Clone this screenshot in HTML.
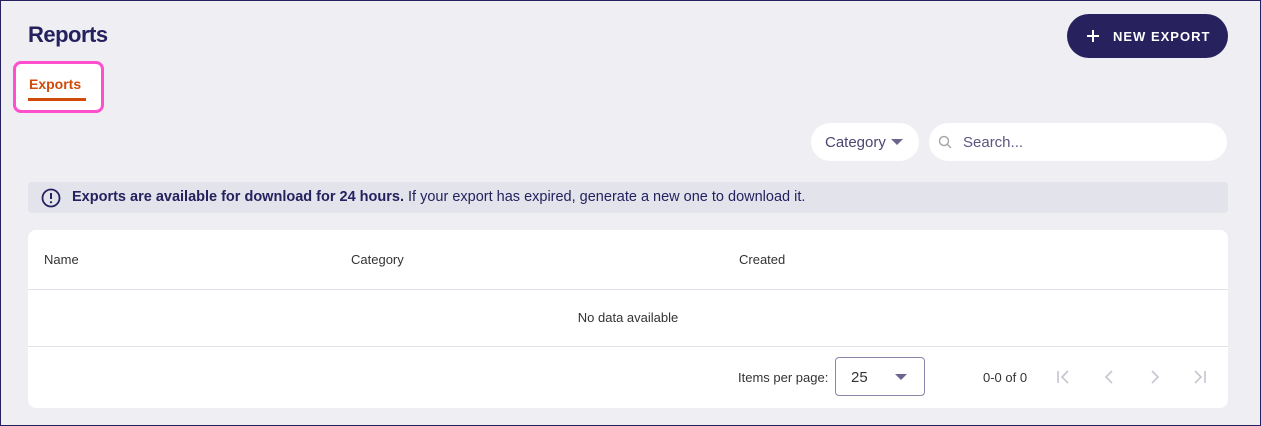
<!DOCTYPE html>
<html><head><style>
*{box-sizing:border-box;margin:0;padding:0}
body{width:1261px;height:426px;background:#eeeef3;font-family:"Liberation Sans",sans-serif;position:relative;overflow:hidden;color:#25215e}
.a{position:absolute}
</style></head><body>
<div class="a" style="left:0;top:0;width:1261px;height:426px;border:1px solid #25215e;z-index:5"></div>
<div class="a" style="left:28px;top:22px;font-size:22px;font-weight:bold;letter-spacing:-0.5px;color:#25215e">Reports</div>
<div class="a" style="left:1067px;top:14px;width:161px;height:44px;border-radius:22px;background:#27215e;color:#fff;font-weight:bold;font-size:13px;letter-spacing:1px">
 <svg class="a" style="left:19px;top:15px" width="14" height="14" viewBox="0 0 14 14"><path d="M7 1v12M1 7h12" stroke="#fff" stroke-width="2"/></svg>
 <span class="a" style="left:46px;top:15px">NEW EXPORT</span></div>
<div class="a" style="left:13px;top:61px;width:91px;height:52px;border:3px solid #ff4fcc;border-radius:8px;background:#fff"></div>
<div class="a" style="left:29px;top:76px;font-size:14px;font-weight:bold;color:#d04a0a">Exports</div>
<div class="a" style="left:28px;top:98px;width:58px;height:3px;background:#d04a0a"></div>
<div class="a" style="left:811px;top:123px;width:108px;height:38px;border-radius:19px;background:#fff;font-size:15px;color:#4a4670">
 <span class="a" style="left:14px;top:11px">Category</span>
 <span class="a" style="left:80px;top:16px;border-left:6px solid transparent;border-right:6px solid transparent;border-top:6px solid #6a6690"></span></div>
<div class="a" style="left:929px;top:123px;width:298px;height:38px;border-radius:19px;background:#fff;font-size:15px;color:#5a5680">
 <svg class="a" style="left:9px;top:12px" width="15" height="15" viewBox="0 0 15 15"><circle cx="6" cy="6" r="4.5" fill="none" stroke="#aaa" stroke-width="1.5"/><path d="M9.5 9.5L13 13" stroke="#aaa" stroke-width="1.5"/></svg>
 <span class="a" style="left:34px;top:11px">Search...</span></div>
<div class="a" style="left:28px;top:182px;width:1200px;height:31px;border-radius:4px;background:#e3e3ec;font-size:14.5px;color:#25215e">
 <svg class="a" style="left:13px;top:6px" width="20" height="20" viewBox="0 0 20 20"><circle cx="10" cy="10" r="8.5" fill="none" stroke="#25215e" stroke-width="1.8"/><path d="M10 5v6" stroke="#25215e" stroke-width="2"/><circle cx="10" cy="14.2" r="1.1" fill="#25215e"/></svg>
 <span class="a" style="left:44px;top:7px;white-space:nowrap"><b>Exports are available for download for 24 hours.</b> If your export has expired, generate a new one to download it.</span></div>
<div class="a" style="left:28px;top:230px;width:1200px;height:178px;border-radius:8px;background:#fff;font-size:13px;color:#333">
 <span class="a" style="left:16px;top:22px">Name</span>
 <span class="a" style="left:323px;top:22px">Category</span>
 <span class="a" style="left:711px;top:22px">Created</span>
 <div class="a" style="left:0;top:59px;width:1200px;height:1px;background:#e2e2ea"></div>
 <span class="a" style="left:0;width:1200px;text-align:center;top:80px">No data available</span>
 <div class="a" style="left:0;top:116px;width:1200px;height:1px;background:#e2e2ea"></div>
 <span class="a" style="left:710px;top:140px">Items per page:</span>
 <div class="a" style="left:807px;top:127px;width:90px;height:39px;border:1px solid #8a85a8;border-radius:4px;font-size:15px">
  <span class="a" style="left:15px;top:11px">25</span>
  <span class="a" style="left:59px;top:16px;border-left:6px solid transparent;border-right:6px solid transparent;border-top:6px solid #6a6690"></span></div>
 <span class="a" style="left:955px;top:140px">0-0 of 0</span>
 <svg class="a" style="left:1027px;top:139px" width="160" height="16" viewBox="0 0 160 16" fill="none" stroke="#c5c5d0" stroke-width="1.6"><path d="M3 2v12M13 2L7 8l6 6"/><path d="M57 2L51 8l6 6"/><path d="M97 2l6 6-6 6"/><path d="M140 2l6 6-6 6M150 2v12"/></svg>
</div>
</body></html>
